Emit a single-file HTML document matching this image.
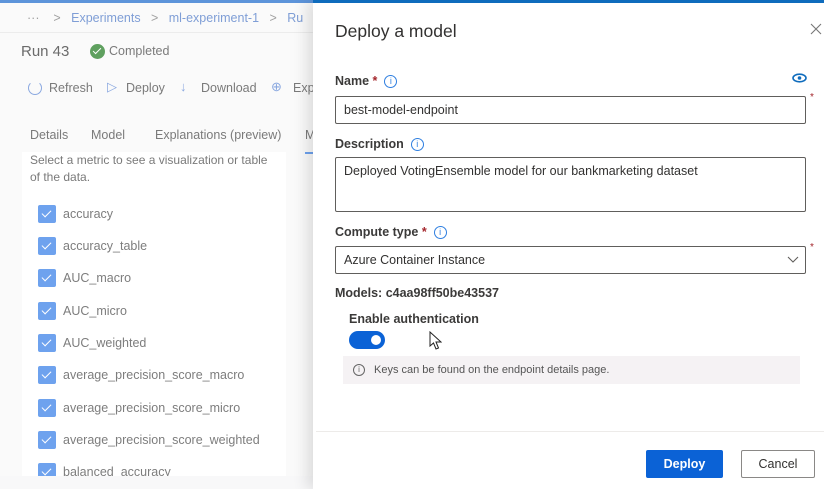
<!DOCTYPE html>
<html><head><style>
*{box-sizing:border-box;margin:0;padding:0}
body{width:824px;height:489px;overflow:hidden;position:relative;font-family:"Liberation Sans",sans-serif;background:#f8f8f9;color:#323130}
.a{position:absolute;white-space:nowrap}
.left{position:absolute;left:0;top:0;width:313px;height:489px;background:#fafafa;color:#7a7a7a}
.card{position:absolute;left:22px;top:152px;width:264px;height:337px;background:#fff}
.cb{position:absolute;left:38px;width:18px;height:18px;background:#6ea2ee;border-radius:2px}
.cb:after{content:"";position:absolute;left:6px;top:3px;width:4px;height:8px;border:solid #fff;border-width:0 1.5px 1.5px 0;transform:rotate(45deg)}
.lbl{position:absolute;left:63px;font-size:12.5px;color:#7d7d7d}
.panel{position:absolute;left:313px;top:0;width:511px;height:489px;background:#fff;box-shadow:-6px 0 14px rgba(0,0,0,.12)}
.inp{position:absolute;left:22px;width:471px;border:1px solid #605e5c;border-radius:2px;font-size:12.5px;padding:0 8px;color:#323130}
.info{display:inline-block;width:13px;height:13px;border:1px solid #2f7fe0;border-radius:50%;font-size:9px;font-weight:normal;color:#2f7fe0;text-align:center;line-height:11px;vertical-align:middle}
.req{color:#a4262c}
.b{font-weight:bold;color:#3b3a39}
</style></head><body>
<div class="left">
<div class="a" style="left:0;top:0;width:313px;height:3px;background:#5d94da"></div>
<div class="a" style="left:27px;top:11px;font-size:12.5px;color:#a0a0a0">···&nbsp;&nbsp;&nbsp;&nbsp;&gt;&nbsp;&nbsp;&nbsp;<span style="color:#7f9ed6">Experiments</span>&nbsp;&nbsp;&nbsp;&gt;&nbsp;&nbsp;&nbsp;<span style="color:#7f9ed6">ml-experiment-1</span>&nbsp;&nbsp;&nbsp;&gt;&nbsp;&nbsp;&nbsp;<span style="color:#7f9ed6">Ru</span></div>
<div class="a" style="left:0;top:32px;width:313px;height:1px;background:#ececec"></div>
<div class="a" style="left:21px;top:43px;font-size:15px;color:#6b6b6b">Run 43</div>
<div class="a" style="left:90px;top:44px;width:15px;height:15px;border-radius:50%;background:#5fa05f"></div>
<div class="a" style="left:95px;top:46px;width:4px;height:8px;border:solid #fff;border-width:0 1.5px 1.5px 0;transform:rotate(45deg)"></div>
<div class="a" style="left:109px;top:44px;font-size:12.5px;color:#7a7a7a">Completed</div>
<div class="a" style="left:28px;top:81px;width:14px;height:14px;border:1.5px solid #8aa8e0;border-radius:50%;border-top-color:transparent"></div>
<div class="a" style="left:49px;top:81px;font-size:12.5px">Refresh</div>
<div class="a" style="left:107px;top:79px;font-size:13px;color:#8aa8e0">▷</div>
<div class="a" style="left:126px;top:81px;font-size:12.5px">Deploy</div>
<div class="a" style="left:180px;top:79px;font-size:13px;color:#8aa8e0">↓</div>
<div class="a" style="left:201px;top:81px;font-size:12.5px">Download</div>
<div class="a" style="left:271px;top:79px;font-size:13px;color:#8aa8e0">⊕</div>
<div class="a" style="left:293px;top:81px;font-size:12.5px">Exp</div>
<div class="a" style="left:30px;top:128px;font-size:12.5px">Details</div>
<div class="a" style="left:91px;top:128px;font-size:12.5px">Model</div>
<div class="a" style="left:155px;top:128px;font-size:12.5px">Explanations (preview)</div>
<div class="a" style="left:305px;top:128px;font-size:12.5px">M</div>
<div class="a" style="left:305px;top:152px;width:10px;height:2px;background:#6ea2ee"></div>
<div class="card"></div>
<div class="a" style="left:30px;top:152px;font-size:12px;line-height:17px;white-space:normal;width:250px">Select a metric to see a visualization or table of the data.</div>
<div class="cb" style="top:205px"></div><div class="lbl" style="top:207px">accuracy</div>
<div class="cb" style="top:237px"></div><div class="lbl" style="top:239px">accuracy_table</div>
<div class="cb" style="top:269px"></div><div class="lbl" style="top:271px">AUC_macro</div>
<div class="cb" style="top:302px"></div><div class="lbl" style="top:304px">AUC_micro</div>
<div class="cb" style="top:334px"></div><div class="lbl" style="top:336px">AUC_weighted</div>
<div class="cb" style="top:366px"></div><div class="lbl" style="top:368px">average_precision_score_macro</div>
<div class="cb" style="top:399px"></div><div class="lbl" style="top:401px">average_precision_score_micro</div>
<div class="cb" style="top:431px"></div><div class="lbl" style="top:433px">average_precision_score_weighted</div>
<div class="cb" style="top:463px"></div><div class="lbl" style="top:465px">balanced_accuracy</div>
<div class="a" style="left:0;top:476px;width:313px;height:13px;background:#f8f8f9"></div>
</div>
<div class="panel">
<div class="a" style="left:0;top:0;width:511px;height:3px;background:#0f6cbd"></div>
<div class="a" style="left:22px;top:21px;font-size:17.5px;color:#323130">Deploy a model</div>
<svg class="a" style="left:497px;top:23px" width="12" height="12" viewBox="0 0 12 12"><path d="M1 1L11 11M11 1L1 11" stroke="#777" stroke-width="1.1"/></svg>
<div class="a b" style="left:22px;top:74px;font-size:12.5px">Name <span class="req">*</span>&nbsp; <span class="info">i</span></div>
<svg class="a" style="left:479px;top:73px" width="15" height="10" viewBox="0 0 15 10"><ellipse cx="7.5" cy="5" rx="6.5" ry="3.8" fill="none" stroke="#0f6cbd" stroke-width="1.6"/><circle cx="7.5" cy="5" r="1.8" fill="#0f6cbd"/></svg>
<div class="inp" style="top:96px;height:28px;line-height:26px">best-model-endpoint</div>
<div class="a req" style="left:497px;top:92px;font-size:10px">*</div>
<div class="a b" style="left:22px;top:137px;font-size:12.5px">Description&nbsp; <span class="info">i</span></div>
<div class="inp" style="top:157px;height:55px;padding-top:6px">Deployed VotingEnsemble model for our bankmarketing dataset</div>
<div class="a b" style="left:22px;top:225px;font-size:12.5px">Compute type <span class="req">*</span>&nbsp; <span class="info">i</span></div>
<div class="inp" style="top:246px;height:28px;line-height:26px">Azure Container Instance</div>
<svg class="a" style="left:474px;top:256px" width="12" height="7" viewBox="0 0 12 7"><path d="M1 1L6 6L11 1" fill="none" stroke="#605e5c" stroke-width="1.1"/></svg>
<div class="a req" style="left:497px;top:242px;font-size:10px">*</div>
<div class="a b" style="left:22px;top:286px;font-size:12.5px">Models: c4aa98ff50be43537</div>
<div class="a b" style="left:36px;top:312px;font-size:12.5px">Enable authentication</div>
<div class="a" style="left:36px;top:331px;width:36px;height:18px;border-radius:9px;background:#0b62d6"></div>
<div class="a" style="left:58px;top:335px;width:10px;height:10px;border-radius:50%;background:#fff"></div>
<svg class="a" style="left:116px;top:331px" width="13" height="19" viewBox="0 0 13 19"><path d="M1 1L1 15L4.5 12L7 18L9.5 17L7 11L12 11Z" fill="#fff" stroke="#222" stroke-width="1"/></svg>
<div class="a" style="left:30px;top:356px;width:457px;height:28px;background:#f5f2f4"></div>
<div class="a" style="left:40px;top:364px;width:12px;height:12px;border:1px solid #666;border-radius:50%;font-size:8px;text-align:center;line-height:10px;color:#666">i</div>
<div class="a" style="left:61px;top:364px;font-size:11px;color:#555">Keys can be found on the endpoint details page.</div>
<div class="a" style="left:3px;top:431px;width:508px;height:1px;background:#edebe9"></div>
<div class="a" style="left:333px;top:450px;width:77px;height:28px;background:#0b62d6;border-radius:2px;color:#fff;font-size:12.5px;font-weight:bold;text-align:center;line-height:28px">Deploy</div>
<div class="a" style="left:428px;top:450px;width:74px;height:28px;border:1px solid #8a8886;border-radius:2px;color:#323130;font-size:12.5px;text-align:center;line-height:26px">Cancel</div>
</div>
</body></html>
